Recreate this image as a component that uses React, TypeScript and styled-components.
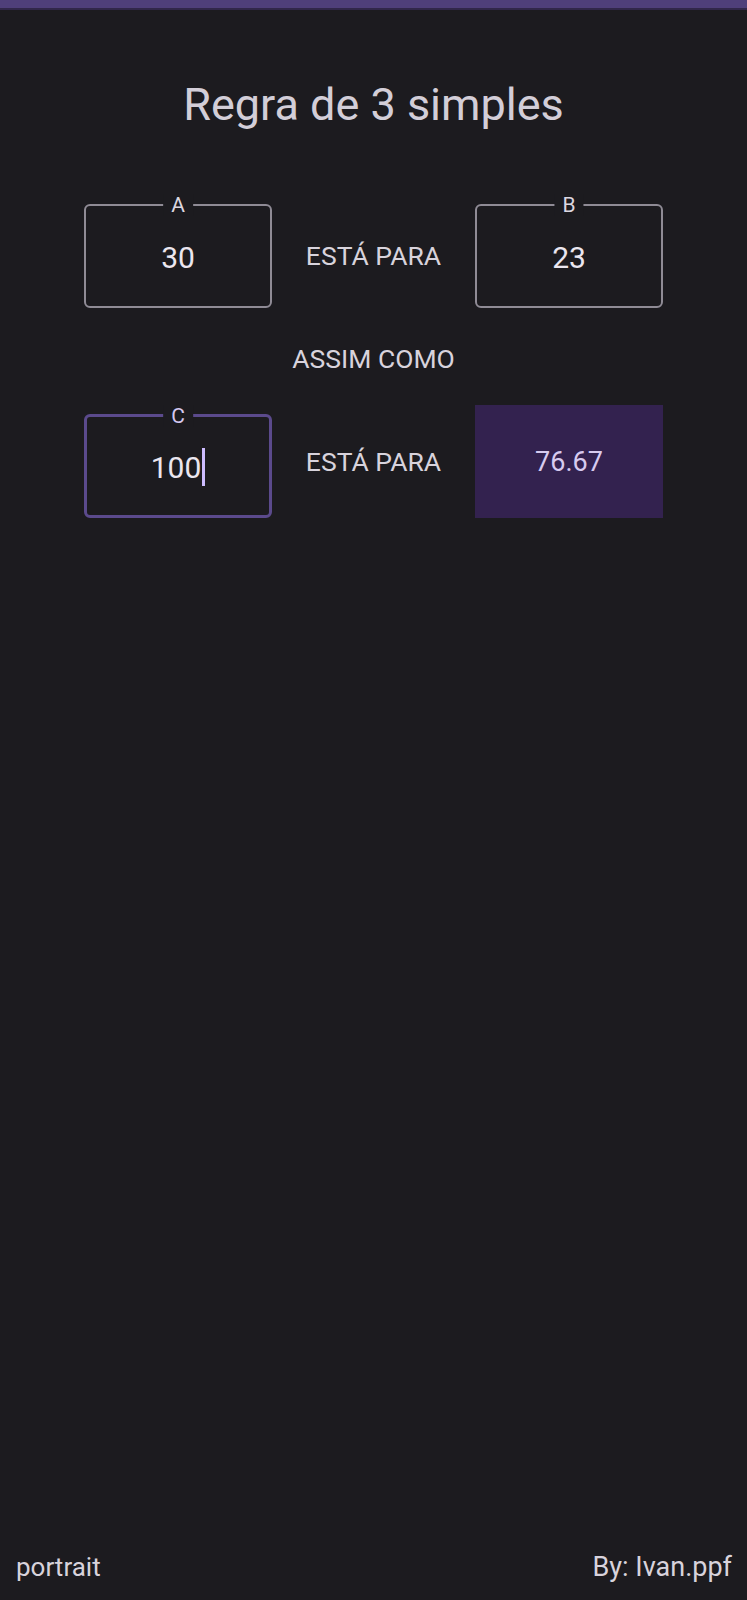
import styled, { createGlobalStyle } from "styled-components";

const GlobalStyle = createGlobalStyle`
    html, body {
        margin: 0;
        padding: 0;
        height: 100%;
        background: #1c1b1f;
    }

    #root {
        min-height: 100%;
    }
`;

const Page = styled.div`
    min-height: 100vh;
    display: flex;
    flex-direction: column;
    background: #1c1b1f;
    font-family: Roboto, "Noto Sans", sans-serif;
    color: #e6e1e5;
`;

const TopBar = styled.div`
    height: 8px;
    background: #4f3f7a;
    border-bottom: 2px solid #31274a;
`;

const Title = styled.h1`
    margin: 68px 0 0;
    font-size: 45px;
    font-weight: 400;
    line-height: 54px;
    text-align: center;
    color: #d3ced8;
`;

const Grid = styled.div<{ $top: number }>`
    display: grid;
    grid-template-columns: 188px 1fr 188px;
    align-items: center;
    width: 579px;
    margin: ${(p) => p.$top}px auto 0;
`;

const Field = styled.div<{ $focused?: boolean }>`
    position: relative;
    box-sizing: border-box;
    height: 104px;
    border: ${(p) => (p.$focused ? "3px solid #5b4a8c" : "2px solid #8f8b95")};
    border-radius: 6px;
    display: flex;
    align-items: center;
    justify-content: center;
    align-self: ${(p) => (p.$focused ? "end" : "center")};
    font-size: 30px;
    color: #ebe6ef;
`;

const FieldLabel = styled.span<{ $focused?: boolean }>`
    position: absolute;
    top: -12px;
    left: 50%;
    transform: translateX(-50%);
    padding: 0 8px;
    background: #1c1b1f;
    font-size: 21px;
    line-height: 22px;
    color: ${(p) => (p.$focused ? "#d4c8f0" : "#dcd7e0")};
`;

const Value = styled.span`
    display: inline-flex;
    align-items: center;
    margin-top: 2px;
`;

const Caret = styled.span`
    display: inline-block;
    width: 3px;
    height: 38px;
    margin-left: 1px;
    background: #cdbcff;
`;

const Connector = styled.div`
    text-align: center;
    font-size: 26.5px;
    line-height: 30px;
    color: #d8d3dc;
`;

const Middle = styled(Connector)`
    margin-top: 36px;
`;

const Result = styled.div`
    height: 113px;
    background: #33224f;
    display: flex;
    align-items: center;
    justify-content: center;
    font-size: 27px;
    color: #d7cbef;
`;

const Footer = styled.div`
    margin-top: auto;
    display: flex;
    justify-content: space-between;
    padding: 0 15px 18px 16px;
    font-size: 26px;
    line-height: 30px;
    color: #d8d3dc;
`;

const Credit = styled.span`
    font-size: 27px;
`;

export default function App() {
    const a = 30;
    const b = 23;
    const c = 100;
    const d = ((b * c) / a).toFixed(2);

    return (
        <Page>
            <GlobalStyle />
            <TopBar />
            <Title>Regra de 3 simples</Title>

            <Grid $top={72}>
                <Field>
                    <FieldLabel>A</FieldLabel>
                    <Value>{a}</Value>
                </Field>
                <Connector>ESTÁ PARA</Connector>
                <Field>
                    <FieldLabel>B</FieldLabel>
                    <Value>{b}</Value>
                </Field>
            </Grid>

            <Middle>ASSIM COMO</Middle>

            <Grid $top={31}>
                <Field $focused>
                    <FieldLabel $focused>C</FieldLabel>
                    <Value>
                        {c}
                        <Caret />
                    </Value>
                </Field>
                <Connector>ESTÁ PARA</Connector>
                <Result>{d}</Result>
            </Grid>

            <Footer>
                <span>portrait</span>
                <Credit>By: Ivan.ppf</Credit>
            </Footer>
        </Page>
    );
}
